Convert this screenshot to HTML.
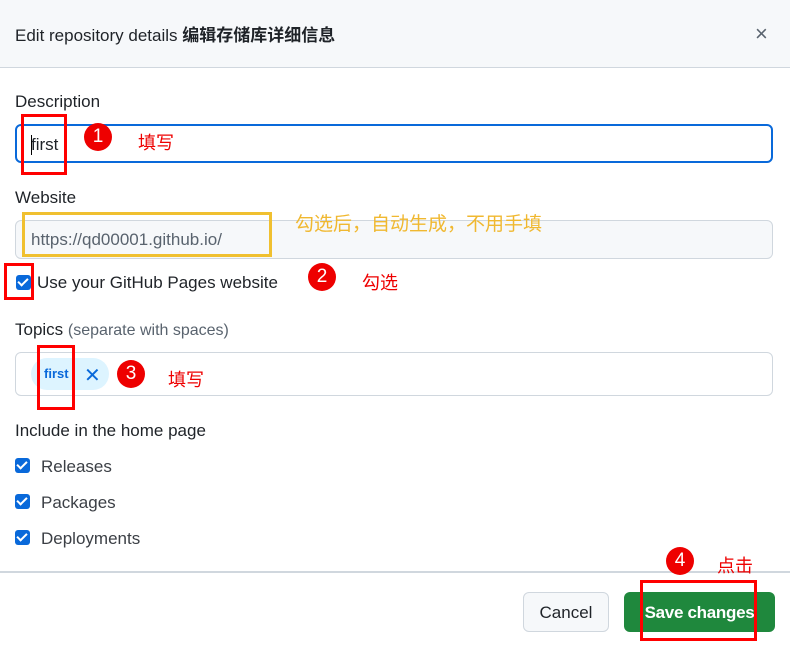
<!DOCTYPE html><html><head><meta charset="utf-8"><style>
body{margin:0;width:790px;height:650px;background:#fff;font-family:"Liberation Sans","Noto Sans CJK SC",sans-serif;color:#1f2328;position:relative;overflow:hidden}
.a{position:absolute}
.lbl{font-size:17px;line-height:20px}
.inp{border:1px solid #d0d7de;border-radius:6px;box-sizing:border-box}
.rr{border:3px solid #f00;box-sizing:border-box}
.c{width:28px;height:28px;border-radius:50%;background:#e00;color:#fff;font-size:19px;text-align:center;line-height:28px}
.rt{color:#e00;font-size:18px}
.cb{width:15px;height:15px;background:#0969da;border-radius:3px}
.cb:after{content:"";position:absolute;left:4px;top:1px;width:4px;height:8px;border:solid #fff;border-width:0 2.5px 2.5px 0;transform:rotate(45deg)}
</style></head><body>
<div class="a" style="left:0;top:0;width:790px;height:67px;background:#f6f8fa;border-bottom:1px solid #d0d7de"></div>
<div class="a" style="left:15px;top:21px;font-size:17px">Edit repository details <b>编辑存储库详细信息</b></div>
<div class="a" style="left:755px;top:21px;font-size:22px;color:#59636e">×</div>
<div class="a lbl" style="left:15px;top:92px">Description</div>
<div class="a inp" style="left:15px;top:124px;width:758px;height:39px;border:2px solid #0969da"></div>
<div class="a" style="left:31px;top:135px;font-size:17px">first</div>
<div class="a" style="left:31px;top:135px;width:1px;height:20px;background:#000"></div>
<div class="a rr" style="left:21px;top:114px;width:46px;height:61px"></div>
<div class="a c" style="left:84px;top:123px">1</div>
<div class="a rt" style="left:138px;top:129px">填写</div>
<div class="a lbl" style="left:15px;top:188px">Website</div>
<div class="a inp" style="left:15px;top:220px;width:758px;height:39px;background:#f6f8fa"></div>
<div class="a" style="left:31px;top:230px;font-size:17px;color:#59636e">https://qd00001.github.io/</div>
<div class="a" style="left:22px;top:212px;width:250px;height:45px;border:3px solid #f0c030;box-sizing:border-box"></div>
<div class="a" style="left:295px;top:209px;font-size:19px;color:#f0b830">勾选后，自动生成，不用手填</div>
<div class="a cb" style="left:16px;top:275px"></div>
<div class="a" style="left:37px;top:273px;font-size:17px">Use your GitHub Pages website</div>
<div class="a rr" style="left:4px;top:263px;width:30px;height:37px"></div>
<div class="a c" style="left:308px;top:263px">2</div>
<div class="a rt" style="left:362px;top:269px">勾选</div>
<div class="a lbl" style="left:15px;top:320px">Topics <span style="color:#59636e;font-size:16px">(separate with spaces)</span></div>
<div class="a inp" style="left:15px;top:352px;width:758px;height:44px"></div>
<div class="a" style="left:31px;top:358px;width:78px;height:32px;background:#ddf4ff;border-radius:16px"></div>
<div class="a" style="left:44px;top:366px;font-size:13px;color:#0969da;font-weight:bold">first</div>
<div class="a" style="left:84px;top:363px;font-size:20px;color:#0969da">✕</div>
<div class="a rr" style="left:37px;top:345px;width:38px;height:65px"></div>
<div class="a c" style="left:117px;top:360px">3</div>
<div class="a rt" style="left:168px;top:366px">填写</div>
<div class="a lbl" style="left:15px;top:421px">Include in the home page</div>
<div class="a cb" style="left:15px;top:458px"></div><div class="a lbl" style="left:41px;top:457px;color:#3b3f45">Releases</div>
<div class="a cb" style="left:15px;top:494px"></div><div class="a lbl" style="left:41px;top:493px;color:#3b3f45">Packages</div>
<div class="a cb" style="left:15px;top:530px"></div><div class="a lbl" style="left:41px;top:529px;color:#3b3f45">Deployments</div>
<div class="a" style="left:0;top:571px;width:790px;height:2px;background:#d0d7de"></div>
<div class="a inp" style="left:523px;top:592px;width:86px;height:40px;background:#f6f8fa;text-align:center;line-height:40px;font-size:17px">Cancel</div>
<div class="a" style="left:624px;top:592px;width:151px;height:40px;background:#1f883d;border-radius:6px;color:#fff;font-weight:bold;text-align:center;line-height:42px;font-size:17px;letter-spacing:-0.3px">Save changes</div>
<div class="a rr" style="left:640px;top:580px;width:117px;height:61px"></div>
<div class="a c" style="left:666px;top:547px">4</div>
<div class="a rt" style="left:717px;top:552px">点击</div>
</body></html>
